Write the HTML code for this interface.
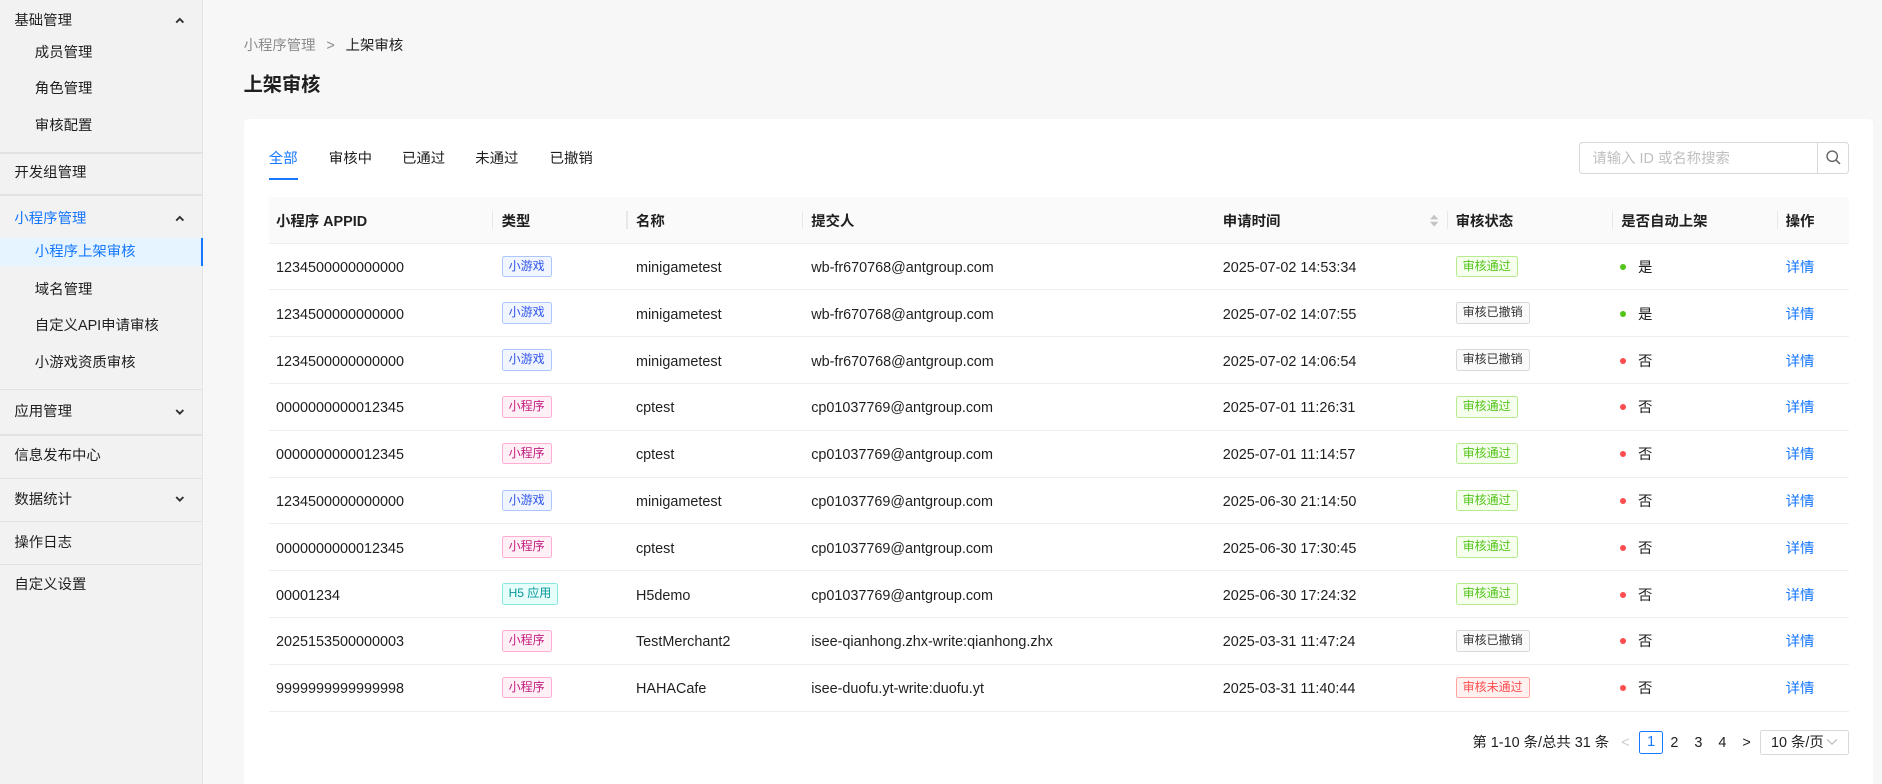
<!DOCTYPE html>
<html><head><meta charset="utf-8"><style>
*{box-sizing:border-box;margin:0;padding:0}
html,body{width:1882px;height:784px;overflow:hidden}
body{zoom:1.2;font-family:"Liberation Sans","Noto Sans CJK SC",sans-serif;font-size:12px;color:#1f1f1f;background:#f7f7f7;position:relative;width:1568.4px;height:653.4px}
.side{position:absolute;left:0;top:0;width:169px;height:100%;background:#f2f2f2;border-right:1px solid #e5e5e5}
.si{position:absolute;left:12px;font-size:12px;line-height:18px;margin-top:1px}
.sub{left:29px}
.sep{position:absolute;left:0;width:169px;height:1px;background:#e2e2e2}
.chev{position:absolute;left:146px;width:8px;height:8px}
.act{position:absolute;left:0;top:198px;width:169px;height:24px;background:#e6f4ff;border-right:2px solid #1677ff}
.abs{position:absolute}
.card{position:absolute;left:203px;top:99px;width:1358px;height:560px;background:#fff;border-radius:4px}
.tab{position:absolute;top:124px;font-size:12px;line-height:18px}
.th{position:absolute;top:164px;left:224px;width:1317px;height:39px;background:#fafafa;border-bottom:1px solid #eee}
.th span{position:absolute;top:2px;line-height:39px;font-weight:600;font-size:12px}
.th i{position:absolute;top:12px;width:1px;height:15px;background:#e8e8e8}
.row{position:absolute;left:224px;width:1317px;height:39px;border-bottom:1px solid #eee}
.row span{position:absolute;top:2px;line-height:38px;font-size:12px;white-space:nowrap}
.tag{position:absolute;top:10px;height:18px;line-height:16px;padding:0 5px;font-size:10px;border:1px solid;border-radius:2px}
.blue{border-color:#adc6ff;background:#f0f5ff;color:#2f54eb}
.mag{border-color:#ffadd2;background:#fff0f6;color:#c41d7f}
.cyan{border-color:#87e8de;background:#e6fffb;color:#08979c}
.ok{border-color:#b7eb8f;background:#f6ffed;color:#52c41a}
.gr{border-color:#d9d9d9;background:#fafafa;color:#333}
.no{border-color:#ffa39e;background:#fff1f0;color:#ff4d4f}
.dot{position:absolute;top:17px;left:1126px;width:5px;height:5px;border-radius:50%}
.pg{position:absolute;top:610px;line-height:19px}
</style></head><body>
<div class="side">
<div class="si" style="top:8px">基础管理</div>
<svg class="chev" style="top:13px" viewBox="0 0 8 8"><path d="M1 5.5L4 2.5L7 5.5" stroke="#333" stroke-width="1.6" fill="none"/></svg>
<div class="si sub" style="top:35px">成员管理</div>
<div class="si sub" style="top:65px">角色管理</div>
<div class="si sub" style="top:96px">审核配置</div>
<div class="sep" style="top:127px"></div>
<div class="si" style="top:135px">开发组管理</div>
<div class="sep" style="top:162px"></div>
<div class="si" style="top:173px;color:#1677ff">小程序管理</div>
<svg class="chev" style="top:178px" viewBox="0 0 8 8"><path d="M1 5.5L4 2.5L7 5.5" stroke="#333" stroke-width="1.6" fill="none"/></svg>
<div class="act"></div>
<div class="si sub" style="top:201px;color:#1677ff">小程序上架审核</div>
<div class="si sub" style="top:232px">域名管理</div>
<div class="si sub" style="top:262px">自定义API申请审核</div>
<div class="si sub" style="top:293px">小游戏资质审核</div>
<div class="sep" style="top:324px"></div>
<div class="si" style="top:334px">应用管理</div>
<svg class="chev" style="top:339px" viewBox="0 0 8 8"><path d="M1 2.5L4 5.5L7 2.5" stroke="#333" stroke-width="1.6" fill="none"/></svg>
<div class="sep" style="top:362px"></div>
<div class="si" style="top:371px">信息发布中心</div>
<div class="sep" style="top:398px"></div>
<div class="si" style="top:407px">数据统计</div>
<svg class="chev" style="top:412px" viewBox="0 0 8 8"><path d="M1 2.5L4 5.5L7 2.5" stroke="#333" stroke-width="1.6" fill="none"/></svg>
<div class="sep" style="top:434px"></div>
<div class="si" style="top:443px">操作日志</div>
<div class="sep" style="top:470px"></div>
<div class="si" style="top:478px">自定义设置</div>
</div>

<div class="abs" style="left:203px;top:30px;line-height:18px"><span style="color:#8c8c8c">小程序管理</span><span style="color:#8c8c8c;margin:0 9px">&gt;</span>上架审核</div>
<div class="abs" style="left:203px;top:61px;font-size:16px;font-weight:bold;line-height:22px">上架审核</div>
<div class="card"></div>
<div class="tab" style="left:224px;color:#1677ff">全部</div>
<div class="abs" style="left:224px;top:148px;width:24px;height:2px;background:#1677ff"></div>
<div class="tab" style="left:274px">审核中</div>
<div class="tab" style="left:335px">已通过</div>
<div class="tab" style="left:396px">未通过</div>
<div class="tab" style="left:458px">已撤销</div>
<div class="abs" style="left:1316px;top:118px;width:225px;height:27px;border:1px solid #d9d9d9;border-radius:3px"></div>
<div class="abs" style="left:1514px;top:118px;width:1px;height:27px;background:#d9d9d9"></div>
<div class="abs" style="left:1327px;top:119px;line-height:27px;color:#bfbfbf">请输入 ID 或名称搜索</div>
<svg class="abs" style="left:1521px;top:124px" width="14" height="14" viewBox="0 0 14 14"><circle cx="6" cy="6" r="4.3" stroke="#666" stroke-width="1.2" fill="none"/><path d="M9.2 9.2L12.5 12.5" stroke="#666" stroke-width="1.3"/></svg>

<div class="th">
<span style="left:6px">小程序 APPID</span><i style="left:186px"></i>
<span style="left:194px">类型</span><i style="left:298px"></i>
<span style="left:306px">名称</span><i style="left:444px"></i>
<span style="left:452px">提交人</span>
<span style="left:795px">申请时间</span>
<svg style="position:absolute;left:968px;top:14px" width="7" height="11" viewBox="0 0 7 11"><path d="M0 4.5L3.5 0.5L7 4.5Z M0 6.5L3.5 10.5L7 6.5Z" fill="#c4c4c4"/></svg><i style="left:982px"></i>
<span style="left:989px">审核状态</span><i style="left:1119px"></i>
<span style="left:1127px">是否自动上架</span><i style="left:1257px"></i>
<span style="left:1264px">操作</span>
</div>

<div class="row" style="top:203px"><span style="left:6px">1234500000000000</span><div class="tag blue" style="left:194px">小游戏</div><span style="left:306px">minigametest</span><span style="left:452px">wb-fr670768@antgroup.com</span><span style="left:795px">2025-07-02 14:53:34</span><div class="tag ok" style="left:989px">审核通过</div><div class="dot" style="background:#52c41a"></div><span style="left:1141px">是</span><span style="left:1264px;color:#1677ff">详情</span></div>
<div class="row" style="top:242px"><span style="left:6px">1234500000000000</span><div class="tag blue" style="left:194px">小游戏</div><span style="left:306px">minigametest</span><span style="left:452px">wb-fr670768@antgroup.com</span><span style="left:795px">2025-07-02 14:07:55</span><div class="tag gr" style="left:989px">审核已撤销</div><div class="dot" style="background:#52c41a"></div><span style="left:1141px">是</span><span style="left:1264px;color:#1677ff">详情</span></div>
<div class="row" style="top:281px"><span style="left:6px">1234500000000000</span><div class="tag blue" style="left:194px">小游戏</div><span style="left:306px">minigametest</span><span style="left:452px">wb-fr670768@antgroup.com</span><span style="left:795px">2025-07-02 14:06:54</span><div class="tag gr" style="left:989px">审核已撤销</div><div class="dot" style="background:#ff4d4f"></div><span style="left:1141px">否</span><span style="left:1264px;color:#1677ff">详情</span></div>
<div class="row" style="top:320px"><span style="left:6px">0000000000012345</span><div class="tag mag" style="left:194px">小程序</div><span style="left:306px">cptest</span><span style="left:452px">cp01037769@antgroup.com</span><span style="left:795px">2025-07-01 11:26:31</span><div class="tag ok" style="left:989px">审核通过</div><div class="dot" style="background:#ff4d4f"></div><span style="left:1141px">否</span><span style="left:1264px;color:#1677ff">详情</span></div>
<div class="row" style="top:359px"><span style="left:6px">0000000000012345</span><div class="tag mag" style="left:194px">小程序</div><span style="left:306px">cptest</span><span style="left:452px">cp01037769@antgroup.com</span><span style="left:795px">2025-07-01 11:14:57</span><div class="tag ok" style="left:989px">审核通过</div><div class="dot" style="background:#ff4d4f"></div><span style="left:1141px">否</span><span style="left:1264px;color:#1677ff">详情</span></div>
<div class="row" style="top:398px"><span style="left:6px">1234500000000000</span><div class="tag blue" style="left:194px">小游戏</div><span style="left:306px">minigametest</span><span style="left:452px">cp01037769@antgroup.com</span><span style="left:795px">2025-06-30 21:14:50</span><div class="tag ok" style="left:989px">审核通过</div><div class="dot" style="background:#ff4d4f"></div><span style="left:1141px">否</span><span style="left:1264px;color:#1677ff">详情</span></div>
<div class="row" style="top:437px"><span style="left:6px">0000000000012345</span><div class="tag mag" style="left:194px">小程序</div><span style="left:306px">cptest</span><span style="left:452px">cp01037769@antgroup.com</span><span style="left:795px">2025-06-30 17:30:45</span><div class="tag ok" style="left:989px">审核通过</div><div class="dot" style="background:#ff4d4f"></div><span style="left:1141px">否</span><span style="left:1264px;color:#1677ff">详情</span></div>
<div class="row" style="top:476px"><span style="left:6px">00001234</span><div class="tag cyan" style="left:194px">H5 应用</div><span style="left:306px">H5demo</span><span style="left:452px">cp01037769@antgroup.com</span><span style="left:795px">2025-06-30 17:24:32</span><div class="tag ok" style="left:989px">审核通过</div><div class="dot" style="background:#ff4d4f"></div><span style="left:1141px">否</span><span style="left:1264px;color:#1677ff">详情</span></div>
<div class="row" style="top:515px"><span style="left:6px">2025153500000003</span><div class="tag mag" style="left:194px">小程序</div><span style="left:306px">TestMerchant2</span><span style="left:452px">isee-qianhong.zhx-write:qianhong.zhx</span><span style="left:795px">2025-03-31 11:47:24</span><div class="tag gr" style="left:989px">审核已撤销</div><div class="dot" style="background:#ff4d4f"></div><span style="left:1141px">否</span><span style="left:1264px;color:#1677ff">详情</span></div>
<div class="row" style="top:554px"><span style="left:6px">9999999999999998</span><div class="tag mag" style="left:194px">小程序</div><span style="left:306px">HAHACafe</span><span style="left:452px">isee-duofu.yt-write:duofu.yt</span><span style="left:795px">2025-03-31 11:40:44</span><div class="tag no" style="left:989px">审核未通过</div><div class="dot" style="background:#ff4d4f"></div><span style="left:1141px">否</span><span style="left:1264px;color:#1677ff">详情</span></div>

<div class="pg" style="left:1227px">第 1-10 条/总共 31 条</div>
<div class="pg" style="left:1351px;color:#ccc">&lt;</div>
<div class="abs" style="left:1366px;top:609px;width:20px;height:19px;border:1px solid #1677ff;border-radius:2px;color:#1677ff;text-align:center;line-height:18px">1</div>
<div class="pg" style="left:1392px">2</div>
<div class="pg" style="left:1412px">3</div>
<div class="pg" style="left:1432px">4</div>
<div class="pg" style="left:1452px">&gt;</div>
<div class="abs" style="left:1467px;top:608px;width:74px;height:21px;border:1px solid #d9d9d9;border-radius:2px;padding-left:8px;line-height:20px">10 条/页</div>
<svg class="abs" style="left:1522px;top:614px" width="10" height="8" viewBox="0 0 10 8"><path d="M1 2L5 6L9 2" stroke="#bbb" fill="none"/></svg>
</body></html>
